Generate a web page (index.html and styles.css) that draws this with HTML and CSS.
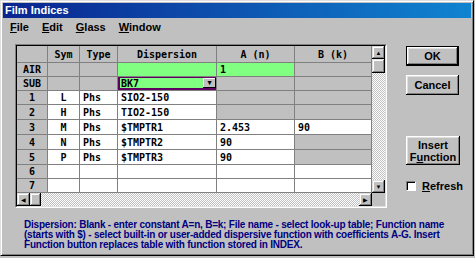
FILE: index.html
```html
<!DOCTYPE html>
<html lang="en">
<head>
  <meta charset="UTF-8" />
  <title>Film Indices</title>
  <link rel="stylesheet" href="styles.css">
</head>
<body>

  <div class="window">
    <div class="titlebar">Film Indices</div>
    <div class="menubar">
      <span><u>F</u>ile</span>
      <span><u>E</u>dit</span>
      <span><u>G</u>lass</span>
      <span><u>W</u>indow</span>
    </div>

    <div class="content">
      <div class="top">
        <div class="frame">
          <div class="frame-inner">
            <div class="grid-row">
              <div class="sheet">
                <div class="c hd"></div><div class="c hd">Sym</div><div class="c hd">Type</div><div class="c hd">Dispersion</div><div class="c hd">A (n)</div><div class="c hd">B (k)</div>

                <div class="c hd">AIR</div><div class="c"></div><div class="c"></div><div class="c green"></div><div class="c green l">1</div><div class="c"></div>

                <div class="c hd">SUB</div><div class="c"></div><div class="c"></div>
                <div class="c green combo"><span class="combo-text">BK7</span><span class="combo-btn">&#9660;</span></div>
                <div class="c"></div><div class="c"></div>

                <div class="c hd">1</div><div class="c w">L</div><div class="c w l">Phs</div><div class="c w l">SIO2-150</div><div class="c"></div><div class="c"></div>
                <div class="c hd">2</div><div class="c w">H</div><div class="c w l">Phs</div><div class="c w l">TIO2-150</div><div class="c"></div><div class="c"></div>
                <div class="c hd">3</div><div class="c w">M</div><div class="c w l">Phs</div><div class="c w l">$TMPTR1</div><div class="c w l">2.453</div><div class="c w l">90</div>
                <div class="c hd">4</div><div class="c w">N</div><div class="c w l">Phs</div><div class="c w l">$TMPTR2</div><div class="c w l">90</div><div class="c"></div>
                <div class="c hd">5</div><div class="c w">P</div><div class="c w l">Phs</div><div class="c w l">$TMPTR3</div><div class="c w l">90</div><div class="c"></div>
                <div class="c hd">6</div><div class="c w"></div><div class="c w"></div><div class="c w"></div><div class="c w"></div><div class="c w"></div>
                <div class="c hd">7</div><div class="c w"></div><div class="c w"></div><div class="c w"></div><div class="c w"></div><div class="c w"></div>
              </div>

              <div class="vscroll">
                <div class="sb-btn">&#9650;</div>
                <div class="sb-btn thumb-v"></div>
                <div class="track"></div>
                <div class="sb-btn">&#9660;</div>
              </div>
            </div>

            <div class="hscroll">
              <div class="sb-btn">&#9664;</div>
              <div class="sb-btn thumb-h"></div>
              <div class="track"></div>
              <div class="sb-btn">&#9654;</div>
              <div class="corner"></div>
            </div>
          </div>
        </div>

        <div class="side">
          <button class="btn default">OK</button>
          <button class="btn cancel">Cancel</button>
          <button class="btn insert">Insert<br>F<u>u</u>nction</button>
          <label class="check"><span class="box"></span><span><u>R</u>efresh</span></label>
        </div>
      </div>

      <p class="help">Dispersion: Blank - enter constant A=n, B=k; File name - select look-up table; Function name<br>(starts with $) - select built-in or user-added dispersive function with coefficients A-G. Insert<br>Function button replaces table with function stored in INDEX.</p>
    </div>
  </div>

</body>
</html>
```

FILE: styles.css
```css
* {
  margin: 0;
  padding: 0;
  box-sizing: border-box;
}

body {
  background: #c0c0c0;
  font-family: 'Liberation Sans', Arial, sans-serif;
  color: #000;
}

.window {
  width: 474px;
  height: 256px;
  background: #c0c0c0;
  border: 1px solid;
  border-color: #dfdfdf #000 #000 #dfdfdf;
  padding: 2px;
  box-shadow: inset 1px 1px #fff, inset -1px -1px #808080;
}

.titlebar {
  height: 15px;
  line-height: 15px;
  padding-left: 2px;
  background: linear-gradient(90deg, #0a2490, #1084d0);
  color: #fff;
  font-size: 11px;
  font-weight: bold;
}

.menubar {
  height: 17px;
  display: flex;
  align-items: center;
  gap: 13px;
  padding-left: 7px;
  font-size: 11px;
  font-weight: bold;
}

.content {
  padding: 9px 0 0 12px;
}

.top {
  display: flex;
}

/* sunken frame round the spreadsheet */
.frame {
  border: 1px solid;
  border-color: #808080 #fff #fff #808080;
}

.frame-inner {
  border: 1px solid;
  border-color: #000 #dfdfdf #dfdfdf #000;
}

.grid-row {
  display: flex;
}

.sheet {
  display: grid;
  grid-template-columns: 30px 31px 37px 98px 77px 76px;
  grid-template-rows: 16px 13px 13px 13px 14px 14px 14px 14px 13px 13px;
  gap: 1px;
  background: #808080;
  border-right: 1px solid #808080;
  border-bottom: 1px solid #808080;
  font-family: 'DejaVu Sans Mono', monospace;
  font-size: 10px;
  font-weight: bold;
}

.c {
  background: #c0c0c0;
  display: flex;
  align-items: center;
  justify-content: center;
  white-space: pre;
  line-height: 13px;
}

.c.l {
  justify-content: flex-start;
  padding-left: 3px;
}

.c.w {
  background: #fff;
}

.c.green {
  background: #80ff80;
}

.combo {
  justify-content: space-between;
  border: 2px solid #600060;
  border-right: none;
  border-top-width: 1px;
}

.combo-text {
  padding-left: 1px;
}

.combo-btn {
  width: 13px;
  height: 100%;
  background: #c0c0c0;
  font-size: 7px;
  display: flex;
  align-items: center;
  justify-content: center;
  box-shadow: inset -1px -1px #000, inset 1px 1px #fff;
}

/* scroll bars */
.vscroll {
  width: 13px;
  display: flex;
  flex-direction: column;
}

.hscroll {
  height: 13px;
  display: flex;
}

.sb-btn {
  width: 13px;
  height: 13px;
  flex: none;
  background: #c0c0c0;
  font-size: 6px;
  display: flex;
  align-items: center;
  justify-content: center;
  box-shadow: inset -1px -1px #000, inset 1px 1px #dfdfdf, inset -2px -2px #808080, inset 2px 2px #fff;
}

.thumb-v {
  height: 14px;
}

.thumb-h {
  width: 11px;
}

.track {
  flex: 1;
  background: repeating-conic-gradient(#c0c0c0 0 25%, #fff 0 50%) 0 0 / 2px 2px;
}

.corner {
  width: 13px;
  background: #c0c0c0;
}

/* buttons on the right */
.side {
  margin-left: 19px;
  padding-top: 2px;
  display: flex;
  flex-direction: column;
  align-items: flex-start;
}

.btn {
  width: 53px;
  height: 20px;
  background: #c0c0c0;
  border: none;
  font-family: 'Liberation Sans', Arial, sans-serif;
  font-size: 11px;
  font-weight: bold;
  color: #000;
  box-shadow: inset -1px -1px #000, inset 1px 1px #fff, inset -2px -2px #808080, inset 2px 2px #dfdfdf;
}

.btn.default {
  border: 1px solid #000;
}

.btn.cancel {
  margin-top: 9px;
}

.btn.insert {
  width: 54px;
  height: 29px;
  margin-top: 41px;
  line-height: 12px;
}

.check {
  margin-top: 15px;
  display: flex;
  align-items: center;
  gap: 6px;
  font-size: 11px;
  font-weight: bold;
}

.box {
  width: 10px;
  height: 10px;
  background: #fff;
  border: 1px solid;
  border-color: #808080 #fff #fff #808080;
  box-shadow: inset 1px 1px #000;
}

.help {
  margin: 12px 0 0 9px;
  color: #000080;
  font-size: 10px;
  font-weight: bold;
  line-height: 10px;
  letter-spacing: -0.22px;
  white-space: nowrap;
}
```
